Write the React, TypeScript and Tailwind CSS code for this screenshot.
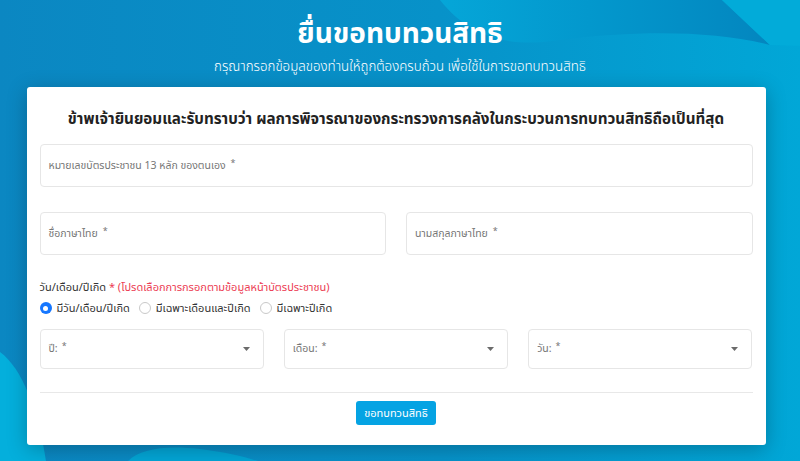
const FONT = { fontFamily: '"Noto Sans", "Noto Sans Thai", Roboto, sans-serif' };

function Field({ label }: { label: string }) {
  return (
    <div className="h-[43px] flex items-center px-[8px] rounded-[4px] border border-[#e6e6e6] bg-white text-[10.5px] text-[#767676]">
      {label}
      <span className="ml-[5px] text-[9px] relative -top-[3px]">*</span>
    </div>
  );
}

function SelectBox({ label }: { label: string }) {
  return (
    <div className="h-[40px] flex items-center justify-between pl-[8px] pr-[13px] rounded-[4px] border border-[#e6e6e6] bg-white text-[10.5px] text-[#767676]">
      <span>
        {label}
        <span className="ml-[4px] text-[9px] relative -top-[3px]">*</span>
      </span>
      <svg width="7" height="4" viewBox="0 0 7 4">
        <path d="M0 0h7L3.5 4z" fill="#6b6b6b" />
      </svg>
    </div>
  );
}

function Radio({ checked, label }: { checked?: boolean; label: string }) {
  return (
    <label className="flex items-center gap-[5px]">
      {checked ? (
        <span className="w-[12px] h-[12px] rounded-full bg-[#1677ff] flex items-center justify-center">
          <span className="w-[5px] h-[5px] rounded-full bg-white" />
        </span>
      ) : (
        <span className="w-[12px] h-[12px] rounded-full border border-[#c9c9c9] bg-white" />
      )}
      <span>{label}</span>
    </label>
  );
}

export default function App() {
  return (
    <div className="relative w-[800px] h-[461px] overflow-hidden bg-[#0a8cc6]" style={FONT}>
      {/* background waves */}
      <svg className="absolute inset-0" width="800" height="461" viewBox="0 0 800 461">
        <defs>
          <linearGradient id="bg" x1="0" y1="0" x2="1" y2="0">
            <stop offset="0" stopColor="#0b87c2" />
            <stop offset="0.55" stopColor="#0792c9" />
            <stop offset="1" stopColor="#01a7d7" />
          </linearGradient>
          <linearGradient id="band" x1="0" y1="0" x2="1" y2="0">
            <stop offset="0" stopColor="#05a6d8" />
            <stop offset="0.45" stopColor="#0398cd" />
            <stop offset="1" stopColor="#0386bf" />
          </linearGradient>
        </defs>
        <rect width="800" height="461" fill="url(#bg)" />
        <path d="M440 0 C470 38 510 48 560 40 C640 30 715 31 770 45 L722 0 Z" fill="url(#band)" />
        <path d="M722 0 L770 45 L800 46 L800 0 Z" fill="#02abd9" />
        <path d="M0 352 C22 368 38 410 46 461 L0 461 Z" fill="#04afdc" />
        <path d="M128 461 C140 449 165 445 200 449 C225 452 245 457 258 461 Z" fill="#03a5d5" />
      </svg>

      <div className="relative flex flex-col items-center">
        <h1 className="mt-[13px] text-[28px] leading-[38px] font-bold text-white">ยื่นขอทบทวนสิทธิ</h1>
        <p className="mt-[6px] text-[13.3px] leading-[18px] text-white font-light">
          กรุณากรอกข้อมูลของท่านให้ถูกต้องครบถ้วน เพื่อใช้ในการขอทบทวนสิทธิ
        </p>

        <div className="mt-[12px] w-[739px] ml-[-8px] h-[358px] bg-white rounded-[3px] shadow-[0_4px_20px_rgba(0,0,0,0.25)] px-[13px] flex flex-col">
          <h2 className="mt-[19px] text-center text-[15.2px] leading-[24px] font-bold text-[#222]">
            ข้าพเจ้ายินยอมและรับทราบว่า ผลการพิจารณาของกระทรวงการคลังในกระบวนการทบทวนสิทธิถือเป็นที่สุด
          </h2>

          <div className="mt-[14px]">
            <Field label="หมายเลขบัตรประชาชน 13 หลัก ของตนเอง" />
          </div>

          <div className="mt-[25px] grid grid-cols-2 gap-[20px]">
            <Field label="ชื่อภาษาไทย" />
            <Field label="นามสกุลภาษาไทย" />
          </div>

          <div className="mt-[23px] text-[11px] leading-[18px] text-[#333]">
            วัน/เดือน/ปีเกิด <span className="text-[#ec3c53]">* (โปรดเลือกการกรอกตามข้อมูลหน้าบัตรประชาชน)</span>
          </div>
          <div className="mt-[3px] flex items-center gap-[9px] text-[11px] leading-[18px] text-[#333]">
            <Radio checked label="มีวัน/เดือน/ปีเกิด" />
            <Radio label="มีเฉพาะเดือนและปีเกิด" />
            <Radio label="มีเฉพาะปีเกิด" />
          </div>

          <div className="mt-[12px] grid grid-cols-3 gap-[20px]">
            <SelectBox label="ปี:" />
            <SelectBox label="เดือน:" />
            <SelectBox label="วัน:" />
          </div>

          <div className="mt-[23px] h-px bg-[#e8e8e8]" />

          <div className="mt-[8px] flex justify-center">
            <button className="h-[24px] px-[8px] rounded-[3px] bg-[#05a3e3] text-white text-[11px]">
              ขอทบทวนสิทธิ
            </button>
          </div>
        </div>
      </div>
    </div>
  );
}
